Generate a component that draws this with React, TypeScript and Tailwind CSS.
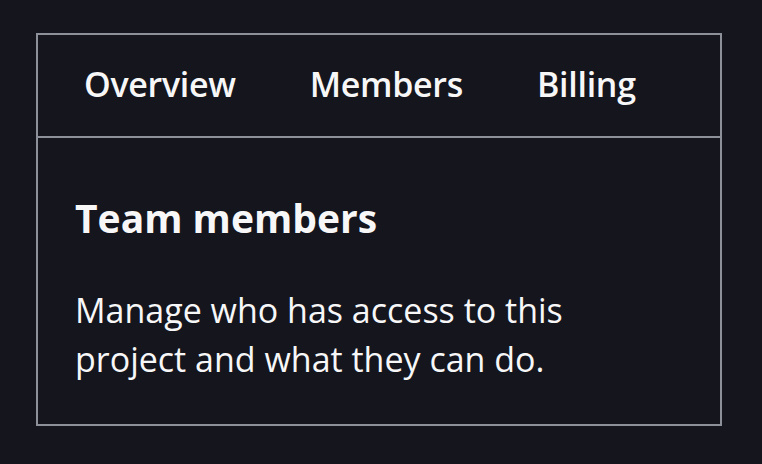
export default function App() {
  const tabs = ["Overview", "Members", "Billing"];

  return (
    <div
      className="w-[762px] h-[464px] bg-[#14151d] pt-[33px] pl-[36px] text-[#f7f7f8]"
      style={{ fontFamily: '"Open Sans", "Noto Sans", sans-serif' }}
    >
      <div className="w-[686px] h-[393px] border-2 border-[#8d9099] flex flex-col">
        {/* tab strip */}
        <div className="h-[103px] shrink-0 border-b-2 border-[#8d9099] flex items-center pl-[46px] pb-[4px] gap-[74px]">
          {tabs.map((t) => (
            <button
              key={t}
              type="button"
              className="text-[34px] font-semibold leading-none tracking-[-0.3px]"
            >
              {t}
            </button>
          ))}
        </div>

        <div className="pt-[56px] pl-[37px]">
          <h2 className="text-[39px] font-bold leading-[47px]">Team members</h2>
          <p className="mt-[45px] text-[34px] leading-[49px] max-w-[540px]">
            Manage who has access to this project and what they can do.
          </p>
        </div>
      </div>
    </div>
  );
}
